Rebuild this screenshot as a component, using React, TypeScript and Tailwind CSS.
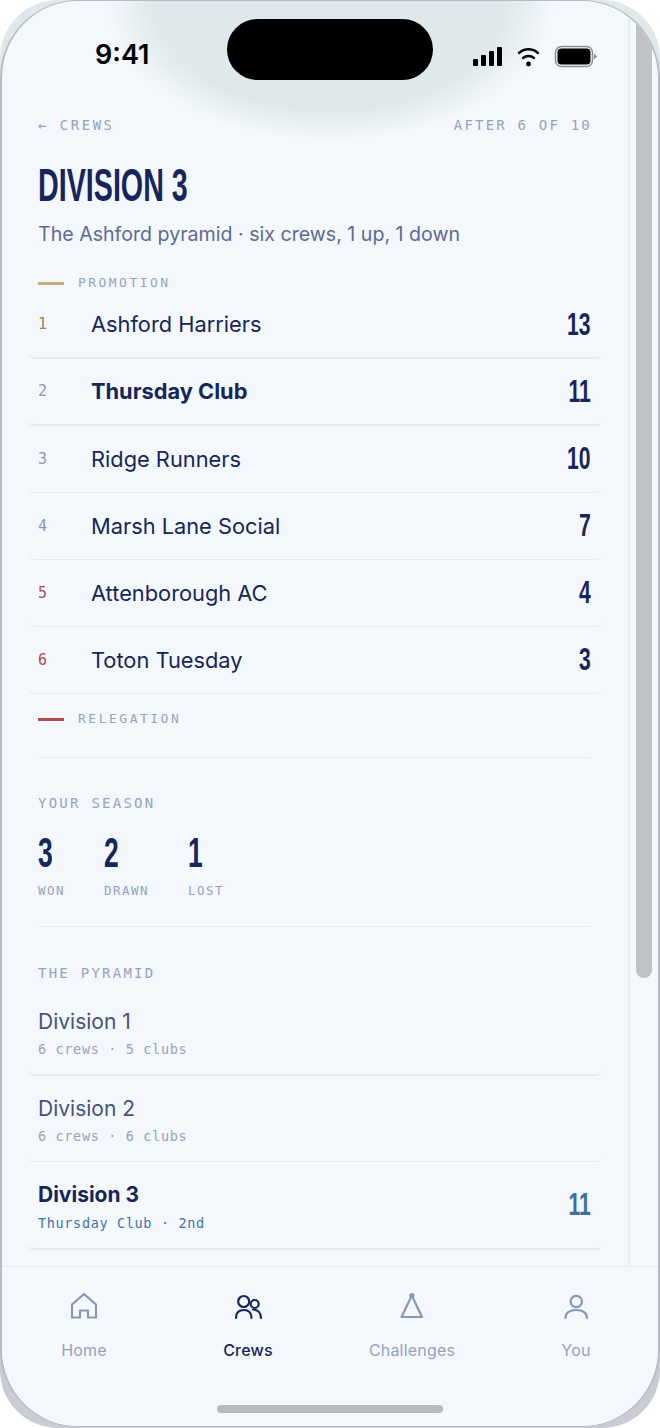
const sans = "font-['Inter','Noto_Sans',sans-serif]";
const mono = "font-['DejaVu_Sans_Mono','Liberation_Mono',monospace]";
const cond = "font-['Liberation_Sans',sans-serif]";

function Big({ children, className = "" }: { children: React.ReactNode; className?: string }) {
  return <span className={`${cond} inline-block font-bold whitespace-nowrap ${className}`}>{children}</span>;
}

const rows = [
  { r: "1", n: "Ashford Harriers", p: "13", c: "text-[#9a8a55]", t: true },
  { r: "2", n: "Thursday Club", p: "11", c: "text-[#8b96b8]", b: true, t: true },
  { r: "3", n: "Ridge Runners", p: "10", c: "text-[#8b96b8]" },
  { r: "4", n: "Marsh Lane Social", p: "7", c: "text-[#8b96b8]" },
  { r: "5", n: "Attenborough AC", p: "4", c: "text-[#b5474f]" },
  { r: "6", n: "Toton Tuesday", p: "3", c: "text-[#b5474f]" },
];

function Label({ children, className = "" }: { children: React.ReactNode; className?: string }) {
  return <div className={`${mono} leading-[16px] text-[#97a1c0] ${className}`}>{children}</div>;
}

function Tab({ label, active, children }: { label: string; active?: boolean; children: React.ReactNode }) {
  return (
    <div className={`flex-1 flex flex-col items-center pt-[24px] ${active ? "text-[#16265c]" : "text-[#8a95b8]"}`}>
      <svg width="30" height="30" viewBox="0 0 30 30" fill="none" stroke="currentColor" strokeWidth="2.2" strokeLinecap="round" strokeLinejoin="round">
        {children}
      </svg>
      <div className={`${sans} mt-[19px] text-[16px] leading-[20px] tracking-[0.2px] ${active ? "font-medium text-[15.5px]" : "text-[#97a1c0]"}`}>{label}</div>
    </div>
  );
}

export default function App() {
  return (
    <div className="w-[660px] h-[1428px] bg-white overflow-hidden">
      <div className="relative w-[660px] h-[1428px] rounded-[58px] bg-[linear-gradient(180deg,#dfe8ea_0%,#dfe8ea_30%,#c9ccd3_70%,#c9ccd3_100%)] overflow-hidden">
        <div className="absolute left-0 right-0 top-0 bottom-[1px] rounded-[78px] border-x-2 border-y border-[#b9bcc2] bg-[#f4f8fd] overflow-hidden flex flex-col">
          <div className="absolute left-1/2 -translate-x-1/2 -top-[140px] w-[450px] h-[280px] rounded-full bg-[radial-gradient(closest-side,#dfe8ea_0%,#dfe8ea_78%,#f4f8fd_100%)]" />
          <div className="absolute left-[225px] top-[18px] w-[206px] h-[61px] rounded-full bg-black" />
          <div className="absolute left-[626px] top-0 bottom-[161px] w-[2px] bg-[#e6edf0]" />
          <div className="absolute left-[634px] top-0 w-[16px] h-[977px] rounded-b-[8px] bg-[#bfc1c4]" />

          <div className="relative flex-1 flex flex-col w-[600px] ml-[26px]">
            <div className="h-[100px] relative">
              <div className={`${sans} absolute left-[67px] top-[36px] text-[27px] leading-[36px] font-semibold text-black`}>9:41</div>
              <svg className="absolute left-[445px] top-[44px]" width="130" height="24" viewBox="0 0 130 24" fill="black">
                <rect x="0" y="14" width="5" height="7" rx="1" />
                <rect x="8" y="10" width="5" height="11" rx="1" />
                <rect x="16" y="6" width="5" height="15" rx="1" />
                <rect x="24" y="2" width="5" height="19" rx="1" />
                <path d="M46 8a14 14 0 0 1 19 0" fill="none" stroke="black" strokeWidth="2.4" strokeLinecap="round" />
                <path d="M50 13a8.500 8.500 0 0 1 11 0" fill="none" stroke="black" strokeWidth="2.4" strokeLinecap="round" />
                <circle cx="55.500" cy="19" r="2.400" />
                <rect x="82.500" y="1.500" width="37" height="20" rx="6" fill="none" stroke="#8d8d8d" strokeWidth="1.500" />
                <rect x="84.500" y="3.500" width="33" height="16" rx="4" />
                <path d="M121 8.500l3 3-3 3z" fill="#8d8d8d" />
              </svg>
            </div>

            <div className="px-[10px] flex justify-between w-[574px] h-[16px] mt-[16px]">
              <Label className="text-[14px] tracking-[2.5px]">← CREWS</Label>
              <Label className="text-[14px] tracking-[2.2px]">AFTER 6 OF 10</Label>
            </div>

            <div className="px-[10px] mt-[32px] h-[40px] flex items-center">
              <Big className="text-[47px] leading-[40px] text-[#16265c] origin-left scale-x-[0.61]">DIVISION 3</Big>
            </div>
            <div className={`${sans} px-[10px] mt-[15px] text-[19.6px] leading-[28px] text-[#5c6a96]`}>The Ashford pyramid · six crews, 1 up, 1 down</div>

            <div className="px-[10px] mt-[27px] h-[16px] flex items-center gap-[14px]">
              <div className="w-[26px] h-[3px] bg-[#c2b27a]" />
              <Label className="text-[13px] tracking-[2.45px]">PROMOTION</Label>
            </div>

            <div className="mt-[1px]">
              {rows.map((x) => (
                <div key={x.r} className={`h-[67px] w-[574px] rounded-[6px] border-[#e3ebee] flex items-center pl-[10px] pr-[11px] ${x.t ? "border-b-2" : "border-b"}`}>
                  <div className={`${mono} w-[53px] text-[15px] ${x.c}`}>{x.r}</div>
                  <div className={`${sans} flex-1 -mt-[1px] text-[21.8px] leading-[28px] text-[#16265c] ${x.b ? "font-bold" : ""}`}>{x.n}</div>
                  <Big className="-mt-[2px] text-[32px] leading-[30px] text-[#16265c] origin-right scale-x-[0.66]">{x.p}</Big>
                </div>
              ))}
            </div>

            <div className="px-[10px] mt-[17px] h-[16px] flex items-center gap-[14px]">
              <div className="w-[26px] h-[3px] bg-[#b5474f]" />
              <Label className="text-[13px] tracking-[2.5px]">RELEGATION</Label>
            </div>

            <div className="ml-[10px] w-[553px] h-[1px] bg-[#e3ebee] mt-[30px]" />
            <Label className="px-[10px] mt-[37px] text-[14px] tracking-[2.25px]">YOUR SEASON</Label>
            <div className="px-[10px] mt-[25px] flex">
              {[["3", "WON", "w-[66px]"], ["2", "DRAWN", "w-[84px]"], ["1", "LOST", "w-[60px]"]].map(([a, b, w]) => (
                <div key={b} className={`${w} flex flex-col`}>
                  <Big className="text-[42px] leading-[34px] text-[#16265c] origin-left scale-x-[0.63]">{a}</Big>
                  <div className={`${mono} mt-[13px] text-[12.5px] leading-[16px] tracking-[1.5px] text-[#97a1c0]`}>{b}</div>
                </div>
              ))}
            </div>
            <div className="ml-[10px] w-[553px] h-[1px] bg-[#e3ebee] mt-[27px]" />
            <Label className="px-[10px] mt-[38px] text-[14px] tracking-[2.25px]">THE PYRAMID</Label>

            <div className="mt-[8px]">
              {[["Division 1", "6 crews · 5 clubs", "border-b-2"], ["Division 2", "6 crews · 6 clubs", "border-b"]].map(([a, b, w]) => (
                <div key={a} className={`h-[86.5px] w-[574px] rounded-[6px] ${w} border-[#e3ebee] px-[10px] pt-[18px]`}>
                  <div className={`${sans} text-[21px] leading-[30px] text-[#45527f]`}>{a}</div>
                  <div className={`${mono} mt-[3px] text-[13.5px] leading-[18px] tracking-[0.65px] text-[#97a1c0]`}>{b}</div>
                </div>
              ))}
              <div className="h-[87.5px] w-[574px] rounded-[6px] border-b-2 border-[#e3ebee] pl-[10px] pr-[11px] pt-[18px] flex items-start justify-between">
                <div>
                  <div className={`${sans} text-[21px] leading-[30px] font-bold text-[#16265c]`}>Division 3</div>
                  <div className={`${mono} mt-[4px] text-[13.5px] leading-[18px] tracking-[0.65px] text-[#3c77a8]`}>Thursday Club · 2nd</div>
                </div>
                <Big className="mt-[9px] text-[32px] leading-[30px] text-[#3c6f9f] origin-right scale-x-[0.66]">11</Big>
              </div>
            </div>
          </div>

          <div className="relative h-[160px] border-t border-[#e3ebee] bg-[#f4f8fd] flex">
            <Tab label="Home">
              <path d="M3 26.500V13.500L15 3l12 10.500v13H19v-7h-8v7z" />
            </Tab>
            <Tab label="Crews" active>
              <circle cx="10.700" cy="10.500" r="5.500" />
              <circle cx="21.700" cy="13" r="4" />
              <path d="M3 27c0-5 3-8 8-8s7.500 3 7.500 8" />
              <path d="M20 18.500c4.500 0 8 3 8 8.500" />
            </Tab>
            <Tab label="Challenges">
              <path d="M14.800 4.500L25 26H4.500z" />
              <circle cx="14.800" cy="4.500" r="1.500" fill="currentColor" />
            </Tab>
            <Tab label="You">
              <circle cx="15.300" cy="10.500" r="5.700" />
              <path d="M4.500 27c0-5 4-8 10.700-8s10.800 3 10.800 8" />
            </Tab>
            <div className="absolute left-[215px] top-[138px] w-[226px] h-[8px] rounded-full bg-[#b7b9be]" />
          </div>
        </div>
      </div>
    </div>
  );
}
